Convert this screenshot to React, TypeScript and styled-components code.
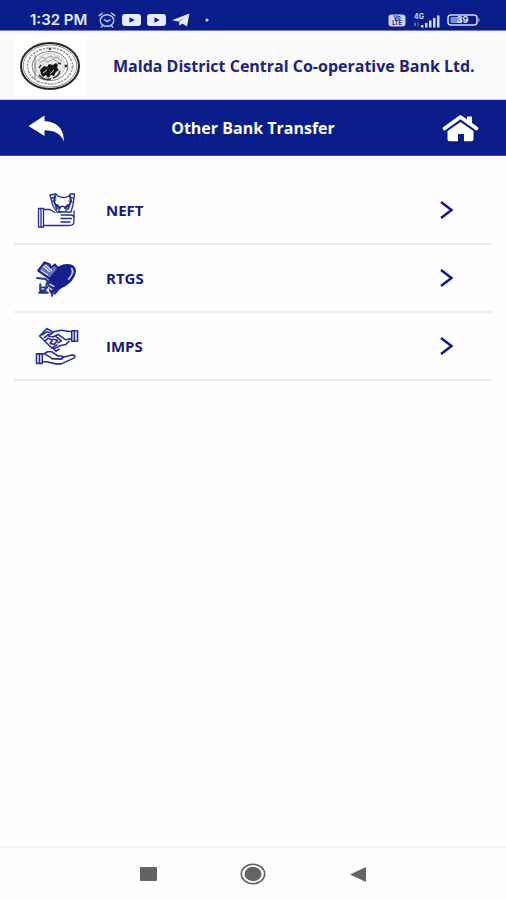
import React from "react";
import styled, { createGlobalStyle } from "styled-components";

const navy = "#081c8a";

const GlobalStyle = createGlobalStyle`
  * { box-sizing: border-box; }
  body { margin: 0; background: #fefefe; font-family: "Open Sans", "Noto Sans", sans-serif; }
  button { border: 0; padding: 0; background: none; font: inherit; color: inherit; cursor: pointer; }
  svg { display: block; flex: none; }
`;

const Screen = styled.div`
  min-height: 100vh;
  display: flex;
  flex-direction: column;
`;

const StatusBar = styled.div`
  height: 31px;
  padding: 10px 25px 0 30px;
  display: flex;
  align-items: center;
  justify-content: space-between;
  background: ${navy};
  border-bottom: 1px solid #6f79bb;
  color: #e8ebff;
`;

const StatusGroup = styled.div<{ $gap: number }>`
  display: flex;
  align-items: center;
  gap: ${(p) => p.$gap}px;
`;

const Clock = styled.time`
  font: 600 15px/20px Inter, Roboto, sans-serif;
  margin-right: 5px;
`;

const BrandHeader = styled.header`
  height: 69px;
  padding: 2px 24px 0 14px;
  display: flex;
  align-items: center;
  gap: 27px;
  background: #fafafa;
  border-bottom: 1px solid #c9cdf0;
`;

const LogoBox = styled.div`
  padding: 5px;
  background: #fff;
`;

const BankName = styled.h1`
  margin: 0;
  flex: 1;
  font-size: 16px;
  line-height: 22px;
  font-weight: 700;
  color: #1c2278;
  white-space: nowrap;
`;

const TitleBar = styled.nav`
  height: 56px;
  padding: 0 26px;
  display: grid;
  grid-template-columns: 40px 1fr 40px;
  align-items: center;
  background: ${navy};
  color: #fff;
  border-bottom: 1px solid #3e4797;
`;

const BarButton = styled.button<{ $align: "start" | "end" }>`
  display: flex;
  justify-content: ${(p) => p.$align};
`;

const PageTitle = styled.h2`
  margin: 0;
  font-size: 16px;
  line-height: 22px;
  font-weight: 700;
  text-align: center;
`;

const TransferList = styled.ul`
  flex: 1;
  list-style: none;
  margin: 0;
  padding: 21px 14px 0;
`;

const TransferItem = styled.li`
  border-bottom: 2px solid #ececec;
`;

const TransferButton = styled.button`
  width: 100%;
  height: 66px;
  display: grid;
  grid-template-columns: 92px 1fr 53px;
  align-items: center;
  text-align: left;
  color: #141b78;
`;

const TransferIcon = styled.span`
  padding-left: 20px;
`;

const TransferLabel = styled.span`
  font-size: 15px;
  line-height: 20px;
  font-weight: 700;
`;

const SystemNav = styled.footer`
  height: 54px;
  padding: 0 96px;
  display: flex;
  align-items: center;
  justify-content: space-between;
  border-top: 2px solid #f5f5f5;
  color: #636363;
`;

const SystemButton = styled.button`
  width: 104px;
  height: 48px;
  display: flex;
  align-items: center;
  justify-content: center;
`;

const AlarmIcon = () => (
  <svg width="18" height="16" viewBox="0 0 18 16" fill="none" stroke="#bfc8f4" strokeWidth="1.4" strokeLinecap="round">
    <ellipse cx="9" cy="8.5" rx="6.8" ry="5.8" />
    <path d="M1.2 3.6 4.4 1.2M16.8 3.6 13.6 1.2M6.3 7.5 9 9.6l3-1.8M4.5 13.6 3.4 15M13.5 13.6l1.1 1.4" />
  </svg>
);

const VideoIcon = () => (
  <svg width="19" height="12" viewBox="0 0 19 12">
    <rect width="19" height="12" rx="3" fill="#e8ebff" />
    <path d="m7.5 3.2 5.2 2.8-5.2 2.8z" fill={navy} />
  </svg>
);

const PlaneIcon = () => (
  <svg width="18" height="14" viewBox="0 0 18 14" fill="#e8ebff">
    <path d="M0 7.2 17.4.4 15 13.6l-4.8-3.2-2.5 2.4-.7-4L13 3.7 6.4 8.6z" />
  </svg>
);

const DotIcon = () => (
  <svg width="22" height="4" viewBox="0 0 22 4"><circle cx="11" cy="2" r="1.6" fill="#d5daf8" /></svg>
);

const VolteIcon = () => (
  <svg width="18" height="13" viewBox="0 0 18 13">
    <rect x=".5" y=".5" width="17" height="12" rx="3" fill="#cbd2f7" />
    <g fill={navy} fontFamily="Inter, sans-serif" fontSize="5.5" fontWeight="700" textAnchor="middle">
      <text x="9" y="6.2">Vo</text>
      <text x="9" y="11.2">LTE</text>
    </g>
  </svg>
);

const SignalIcon = () => (
  <svg width="27" height="15" viewBox="0 0 27 15" fill="#d5daf8">
    <text x="1" y="5.6" fontFamily="Inter, sans-serif" fontSize="7" fontWeight="700">4G</text>
    <path d="M1 13V9.5h2V13zM4.5 9.5h1.2V13H4.5z" opacity=".4" />
    <path d="M8 12h2.5v2.5H8zM12 10h2.5v4.5H12zM16 7.5h2.5v7H16zM20 5h2.5v9.5H20zM24 2.5h2.5v12H24z" />
  </svg>
);

const BatteryIcon = () => (
  <svg width="34" height="12" viewBox="0 0 34 12">
    <rect x="1" y="1" width="29" height="10" rx="3" fill="none" stroke="#d5daf8" strokeWidth="1.5" />
    <rect x="3.5" y="3" width="11" height="6" rx="1" fill="#7d8cd6" />
    <path d="M31.5 3.5q2 2.5 0 5z" fill="#d5daf8" />
    <text x="15.5" y="9.2" textAnchor="middle" fill="#eef0ff" fontFamily="Inter, sans-serif" fontSize="9" fontWeight="700">39</text>
  </svg>
);

const BankLogo = () => (
  <svg width="62" height="50" viewBox="0 0 62 50" fill="none" role="img" aria-label="Bank seal">
    <ellipse cx="31" cy="25" rx="29" ry="23" stroke="#252525" strokeWidth="2" />
    <ellipse cx="31" cy="25" rx="26.8" ry="21" stroke="#8c8c8c" strokeWidth="1" />
    <ellipse cx="31" cy="25" rx="22.5" ry="18" stroke="#999" strokeWidth="1.6" strokeDasharray="3 1 2 1" />
    <ellipse cx="31" cy="25" rx="18" ry="14.5" stroke="#777" strokeWidth="1" />
    <ellipse cx="31" cy="25" rx="15" ry="12.5" fill="#e9e9e9" stroke="#bbb" strokeDasharray="3 1" />
    <path d="M16 14v24" stroke="#777" />
    <path d="m19 20 4-4 4 2 4-3 4 2 4-1 4 5M20 22l5-3 4 2 5-3 5 3" stroke="#999" />
    <path d="m21 29 4-4 3 1 2-3 4 1 3-2 2 2-1 3 2 2-3 2-2 4-3-1-3 3-2-3-3 2-2-3z" fill="#161616" />
    <path d="m24 32 4-3m3 4 4-4" stroke="#ddd" strokeWidth="1" />
    <path d="M20 34c3 4 8 5 12 4m9-8c-1 4-4 6-7 7M22 24l-2 3m19-5 3 1" stroke="#333" strokeWidth="1.4" />
    <circle cx="47" cy="25" r="1.5" fill="#333" />
    <circle cx="31" cy="8" r="1.2" fill="#444" />
  </svg>
);

const BackIcon = () => (
  <svg width="40" height="30" viewBox="0 0 40 30" fill="#fff">
    <path d="M2.5 13 18.5 2.500v5.700C29 8.500 38 14 38 28.500 34.500 21 29 17.300 18.500 17.300V23z" />
  </svg>
);

const HomeIcon = () => (
  <svg width="38" height="30" viewBox="1 0 38 30">
    <path d="M26 3.5h5v8h-5z" fill="#fff" />
    <path d="M3.5 15.5 19.5 4l16 11.5" fill="none" stroke="#fff" strokeWidth="3.6" strokeLinecap="round" strokeLinejoin="round" />
    <path d="M19.5 9 32.5 18v8.5a1.8 1.8 0 0 1-1.8 1.8H23V21h-6v7.3H8.3a1.8 1.8 0 0 1-1.8-1.8V18z" fill="#fff" />
  </svg>
);

const CashHandIcon = () => (
  <svg width="44" height="40" viewBox="0 0 44 40" fill="none" stroke="#242e91" strokeWidth="1.3" strokeLinejoin="round" strokeLinecap="round">
    <path d="M4.5 18.500H9.500V37H4.500zM7 19v17.500M9.500 19.500H16l5 3M40 21v10.500q0 4-5 4H9.500" />
    <path d="M27 25h10q2 0 3 2M27 28.500h10.500M27 32h9" />
    <path d="M16 5l6-1 2 2c4 2 8 2 11 0l1-2h4.500L39 15l-2 7h-4M16 5l3 11 4 6h4M18 8l4-1M19 11l3-1M36 7l3 1M35 11l3 1" />
    <path d="m21 6-1 5 3 8M36 6l1 5-3 8M23 15l3 3M34 15l-3 3" strokeWidth="2" />
    <path d="M25 22v-4q3.500-3.500 7 0v4z" />
  </svg>
);

const MoneyBagIcon = () => (
  <svg width="44" height="40" viewBox="2 1 42 38" fill="none" strokeLinejoin="round" strokeLinecap="round">
    <path d="M17 21C20 10 31 5 39 8.500c6 5-1 16-10 20l-8 5q-4 1-4-4-2-4 0-8.500z" fill="#14208b" stroke="#14208b" strokeWidth="1.4" />
    <path d="M38 11c2 3 0 7-3 10" stroke="#c5cbf2" strokeWidth="1.7" />
    <path d="m6 13 6-8 5 2 1 3 4-3 3 4-8 10-4-3z" fill="#6873ba" stroke="#14208b" strokeWidth="1.8" />
    <path d="m11 9 6 5m-4-6 6 5m-10 0 6 4" stroke="#e8eaff" strokeWidth="1" />
    <path d="m5 20 8 1 4 4M8 26v6h5v-3h5v5M10 29h4v-4h5M7 34h8M21 31l-2 6M25 31l-3 4" stroke="#26328f" strokeWidth="2" />
    <path d="m17 26 4 2m-5 1 3 2" stroke="#e8eaff" strokeWidth="1.2" />
  </svg>
);

const ExchangeIcon = () => (
  <svg width="46" height="40" viewBox="2 1 42 38" fill="none" stroke="#242e91" strokeWidth="1.5" strokeLinejoin="round" strokeLinecap="round">
    <path d="M37 5.500h5.500v10H37zM39.500 6v9M37 6.500 27 5l-7 1.500-5 4 4 1 5-2.500 7 5 3-.5h3" />
    <path d="m13.500 3.500-7 7 10 10 4 2 6-3 5-1 3-3M9 9.500l4.500-3 4 1.500M11 12l4-3M11.500 15.500l3-3 4 2-2 3 4 1 3-4-4-1M24 17l3-2-5-4M13.500 3.500l5 3M18 22l5-3" />
    <path d="M3.500 27.500H9v9H3.500zM6.300 28v8M9 28.500l5-3h4l6 4h4q2 2-1 3l-9-.5M28 31l9-2.500q5 0 2 3L27 37h-5l-9-2H9M12 28l5 3" />
    <path d="m20 23 2 2 3-2" />
  </svg>
);

const ChevronIcon = () => (
  <svg width="16" height="20" viewBox="0 0 16 20" fill="none" stroke="#10187f" strokeWidth="2.5">
    <path d="M2 2 12.500 10 2 18" />
  </svg>
);

const transfers = [
  { label: "NEFT", Icon: CashHandIcon },
  { label: "RTGS", Icon: MoneyBagIcon },
  { label: "IMPS", Icon: ExchangeIcon },
];

export default function App() {
  return (
    <Screen>
      <GlobalStyle />
      <StatusBar>
        <StatusGroup $gap={6}>
          <Clock>1:32 PM</Clock>
          <AlarmIcon />
          <VideoIcon />
          <VideoIcon />
          <PlaneIcon />
          <DotIcon />
        </StatusGroup>
        <StatusGroup $gap={7}>
          <VolteIcon />
          <SignalIcon />
          <BatteryIcon />
        </StatusGroup>
      </StatusBar>
      <BrandHeader>
        <LogoBox><BankLogo /></LogoBox>
        <BankName>Malda District Central Co-operative Bank Ltd.</BankName>
      </BrandHeader>
      <TitleBar>
        <BarButton $align="start" type="button" aria-label="Back"><BackIcon /></BarButton>
        <PageTitle>Other Bank Transfer</PageTitle>
        <BarButton $align="end" type="button" aria-label="Home"><HomeIcon /></BarButton>
      </TitleBar>
      <TransferList>
        {transfers.map(({ label, Icon }) => (
          <TransferItem key={label}>
            <TransferButton type="button">
              <TransferIcon><Icon /></TransferIcon>
              <TransferLabel>{label}</TransferLabel>
              <ChevronIcon />
            </TransferButton>
          </TransferItem>
        ))}
      </TransferList>
      <SystemNav>
        <SystemButton type="button" aria-label="Recent apps">
          <svg width="17" height="14"><rect width="17" height="14" rx="1" fill="currentColor" /></svg>
        </SystemButton>
        <SystemButton type="button" aria-label="Home screen">
          <svg width="26" height="22" viewBox="0 0 26 22">
            <ellipse cx="13" cy="11" rx="11.7" ry="9.7" fill="none" stroke="currentColor" strokeWidth="1.6" />
            <ellipse cx="13" cy="11" rx="8.5" ry="7.2" fill="currentColor" />
          </svg>
        </SystemButton>
        <SystemButton type="button" aria-label="System back">
          <svg width="16" height="15"><path d="M0 7.5 16 0v15z" fill="currentColor" /></svg>
        </SystemButton>
      </SystemNav>
    </Screen>
  );
}
